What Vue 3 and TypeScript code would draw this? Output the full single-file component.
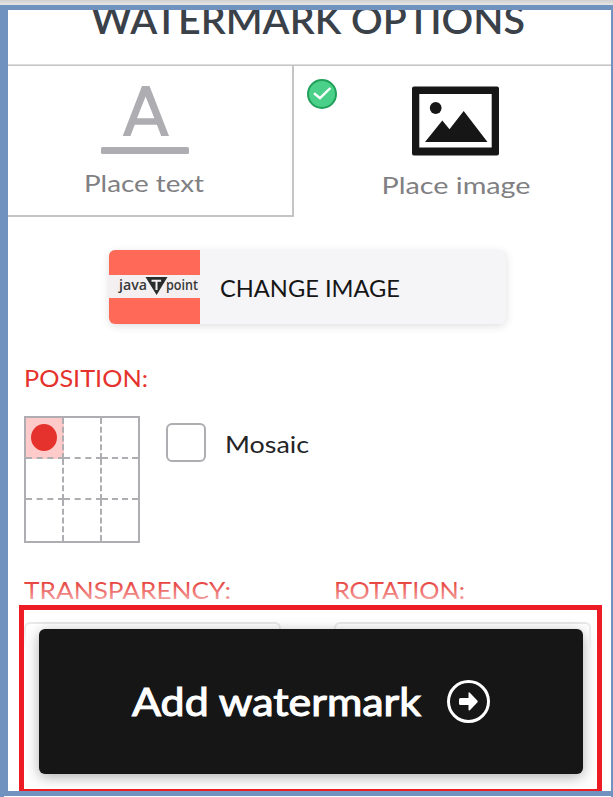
<script setup lang="ts">
import { ref } from 'vue'

type Mode = 'text' | 'image'

const mode = ref<Mode>('image')
const mosaic = ref(false)
const position = ref(1)
</script>

<template>
  <div class="page">
    <div class="topbar"></div>
    <main class="panel">
      <header class="title">
        <svg class="line" width="436" height="40"><text class="t-title" x="-1" y="24" textLength="434" lengthAdjust="spacingAndGlyphs">WATERMARK OPTIONS</text></svg>
      </header>

      <nav class="tabs">
        <div class="tab" :class="{ inactive: mode !== 'text' }" @click="mode = 'text'">
          <svg class="icon-text" width="88" height="69" viewBox="0 0 88 69">
            <path d="M41 0h7.500l19.500 50h-7.800l-4.300-11.200H33.700L29.500 50h-7.800zM44.600 10.500L36 32.300h17.400z" fill="#adadb2" />
            <rect x="0" y="61" width="88" height="7" rx="1.500" fill="#adadb2" />
          </svg>
          <svg class="line" width="119" height="24"><text class="t-tab" x="-1" y="20" textLength="120" lengthAdjust="spacingAndGlyphs">Place text</text></svg>
        </div>
        <div class="tab" :class="{ inactive: mode !== 'image' }" @click="mode = 'image'">
          <svg v-if="mode === 'image'" class="badge" width="30" height="30" viewBox="0 0 30 30">
            <circle cx="15" cy="15" r="14" fill="#4bd08a" stroke="#21a05a" stroke-width="2" />
            <path d="M7 14.200l6 4.900L23.400 9" fill="none" stroke="#fff" stroke-width="2.400" />
          </svg>
          <svg class="icon-image" width="87" height="70" viewBox="0 0 87 70">
            <path fill-rule="evenodd" d="M2 .5h83a2 2 0 0 1 2 2v65a2 2 0 0 1-2 2H2a2 2 0 0 1-2-2v-65a2 2 0 0 1 2-2zM7.300 8v53.500h72.400V8z" fill="#161616" />
            <circle cx="23.700" cy="22" r="5.900" fill="#161616" />
            <path d="M13 56l17.300-21.500 7.200 8.800L51.700 25 75.500 56z" fill="#161616" />
          </svg>
          <svg class="line" width="147" height="28"><text class="t-tab" x="-1.500" y="20" textLength="149" lengthAdjust="spacingAndGlyphs">Place image</text></svg>
        </div>
      </nav>

      <section class="upload">
        <div class="thumb">
          <div class="brand">
            <svg width="91" height="23" viewBox="0 0 91 23">
              <text class="t-brand" x="10" y="15" textLength="28" lengthAdjust="spacingAndGlyphs">java</text>
              <path d="M36.500 2h22L47.600 20z" fill="#292c2c" />
              <path d="M42.500 5.800h9.600M47.500 5v10" fill="none" stroke="#f4eff0" stroke-width="2" />
              <text class="t-brand" x="57" y="15" textLength="32" lengthAdjust="spacingAndGlyphs">point</text>
            </svg>
          </div>
        </div>
        <svg class="line" width="180" height="24"><text class="t-change" x="0" y="20" textLength="180" lengthAdjust="spacingAndGlyphs">CHANGE IMAGE</text></svg>
      </section>

      <section class="position">
        <svg class="line" width="124" height="22"><text class="t-label" x="-1" y="19" textLength="124" lengthAdjust="spacingAndGlyphs">POSITION:</text></svg>
        <div class="choices">
          <div class="grid">
            <div v-for="n in 9" :key="n" class="cell" :class="{ active: position === n }" @click="position = n">
              <span v-if="position === n" class="dot"></span>
            </div>
          </div>
          <div class="mosaic" @click="mosaic = !mosaic">
            <span class="box"></span>
            <svg class="line" width="83" height="24"><text class="t-mosaic" x="-2" y="20" textLength="84" lengthAdjust="spacingAndGlyphs">Mosaic</text></svg>
          </div>
        </div>
      </section>

      <section class="fields">
        <div class="field">
          <svg class="line" width="207" height="22"><text class="t-label" x="0" y="19" textLength="207" lengthAdjust="spacingAndGlyphs">TRANSPARENCY:</text></svg>
          <div class="input"></div>
        </div>
        <div class="field">
          <svg class="line" width="131" height="22"><text class="t-label" x="0" y="19" textLength="131" lengthAdjust="spacingAndGlyphs">ROTATION:</text></svg>
          <div class="input"></div>
        </div>
      </section>

      <div class="fade"></div>
      <div class="highlight">
        <button class="submit">
          <svg class="line" width="290" height="40"><text class="t-submit" x="0" y="34" textLength="289" lengthAdjust="spacingAndGlyphs">Add watermark</text></svg>
          <svg class="arrow" width="43" height="43" viewBox="0 0 43 43">
            <circle cx="21.500" cy="21.500" r="20" fill="none" stroke="#fff" stroke-width="3" />
            <path d="M13.500 18h8v-4.500q0-2 1.600-.5l7.200 7.500q1 1 0 2l-7.200 7.500q-1.600 1.400-1.600-.5V25h-8q-1.500 0-1.500-1.500v-4q0-1.500 1.500-1.500z" fill="#fff" />
          </svg>
        </button>
      </div>
    </main>
    <div class="edge"></div>
  </div>
</template>

<style>
body { background: #fff; overflow: hidden; }
</style>

<style scoped>
.page {
  width: 613px;
  height: 797px;
  overflow: hidden;
  font-family: Lato, "Open Sans", sans-serif;
  display: flex;
  flex-direction: column;
}
.page * { box-sizing: border-box; }
.topbar { height: 5px; background: linear-gradient(#d0d0d0, #e6e6e6); }
.panel {
  position: relative;
  height: 791px;
  border: solid #7092be;
  border-width: 5px 2px 5px 8px;
  background: #fff;
  overflow: hidden;
}
.edge { height: 1px; border-left: 4px solid #7092be; border-right: 2px solid #7092be; }
svg { display: block; flex: none; }
.line { overflow: visible; }

.title {
  height: 56px;
  padding-left: 84px;
  border-bottom: 1px solid #c4c4c4;
  box-shadow: inset 0 -1px #dedede;
  overflow: hidden;
}
.t-title { font-size: 39px; font-weight: 600; fill: #3a4149; }

.tabs { display: grid; grid-template-columns: 286px 317px; height: 151px; }
.tab { position: relative; display: flex; flex-direction: column; align-items: center; }
.tab:first-child { padding: 20px 12px 0 0; gap: 17px; }
.tab:last-child { padding: 20px 0 0 6px; gap: 18px; }
.tab:last-child .line { margin-left: 1px; }
.tab.inactive { border-right: 2px solid #c4c4c4; border-bottom: 2px solid #c4c4c4; }
.tab:first-child .icon-text { margin-left: 2px; }
.tab:first-child .line { margin-left: 1px; }
.badge { position: absolute; left: 13px; top: 13px; }
.t-tab { font-size: 24px; fill: #808083; }

.upload {
  display: flex;
  align-items: center;
  gap: 20px;
  width: 397px;
  height: 74px;
  margin: 33px 0 0 101px;
  border-radius: 6px;
  background: #f5f5f8;
  box-shadow: 0 2px 8px rgba(0, 0, 0, .13);
}
.thumb {
  width: 91px;
  height: 74px;
  padding-top: 25px;
  border-radius: 6px 0 0 6px;
  background: #ff6a58;
}
.brand { height: 23px; background: #f4eff0; }
.t-brand { font-family: "Open Sans", sans-serif; font-size: 14px; font-weight: 600; fill: #353838; }
.t-change { font-size: 22.500px; fill: #161616; }
.upload .line { margin-top: 4px; }

.position { padding: 44px 0 0 17px; }
.t-label { font-size: 23.500px; fill: #e5322d; }
.choices { display: flex; gap: 26px; padding-top: 26px; margin-left: -1px; }
.grid {
  display: grid;
  grid-template-columns: 38px 38px 36px;
  grid-template-rows: 41px 41px 41px;
  width: 116px;
  height: 127px;
  border: 2px solid #adadb2;
}
.cell {
  display: flex;
  align-items: center;
  justify-content: center;
  border: 0 dashed #adadb2;
  border-right-width: 2px;
  border-bottom-width: 2px;
}
.cell:nth-child(3n) { border-right-width: 0; }
.cell:nth-child(n + 7) { border-bottom-width: 0; }
.cell.active { background: #ffcaca; }
.dot { width: 26px; height: 27px; border-radius: 50%; background: #e5322d; }
.mosaic { display: flex; gap: 21px; padding-top: 7px; }
.box { width: 40px; height: 39px; border: 2px solid #adadb2; border-radius: 6px; }
.mosaic .line { margin-top: 10px; }
.t-mosaic { font-size: 24px; fill: #242426; }

.fields { display: flex; gap: 53px; padding: 37px 0 0 16px; }
.field { width: 257px; }
.input { height: 60px; margin-top: 20px; border: 2px solid #adadb2; border-radius: 6px; }

.fade {
  position: absolute;
  left: 0;
  right: 0;
  bottom: 0;
  height: 221px;
  background: linear-gradient(transparent 9px, rgba(255, 255, 255, .55) 30px, rgba(255, 255, 255, .74) 54px, #fff 80px);
}
.highlight {
  position: absolute;
  left: 11px;
  top: 595px;
  width: 583px;
  height: 186px;
  padding: 19px 0 0 15px;
  border: 5px solid #ed1c24;
  border-bottom-width: 2px;
  overflow: hidden;
}
.submit {
  display: flex;
  align-items: center;
  gap: 25px;
  width: 544px;
  height: 145px;
  padding: 0 0 0 93px;
  border: 0;
  border-radius: 6px;
  background: #161616;
  box-shadow: 0 3px 14px rgba(0, 0, 0, .32);
  font-family: inherit;
}
.t-submit { font-size: 39px; font-weight: 400; fill: #fff; stroke: #fff; stroke-width: 1.100px; }
</style>
